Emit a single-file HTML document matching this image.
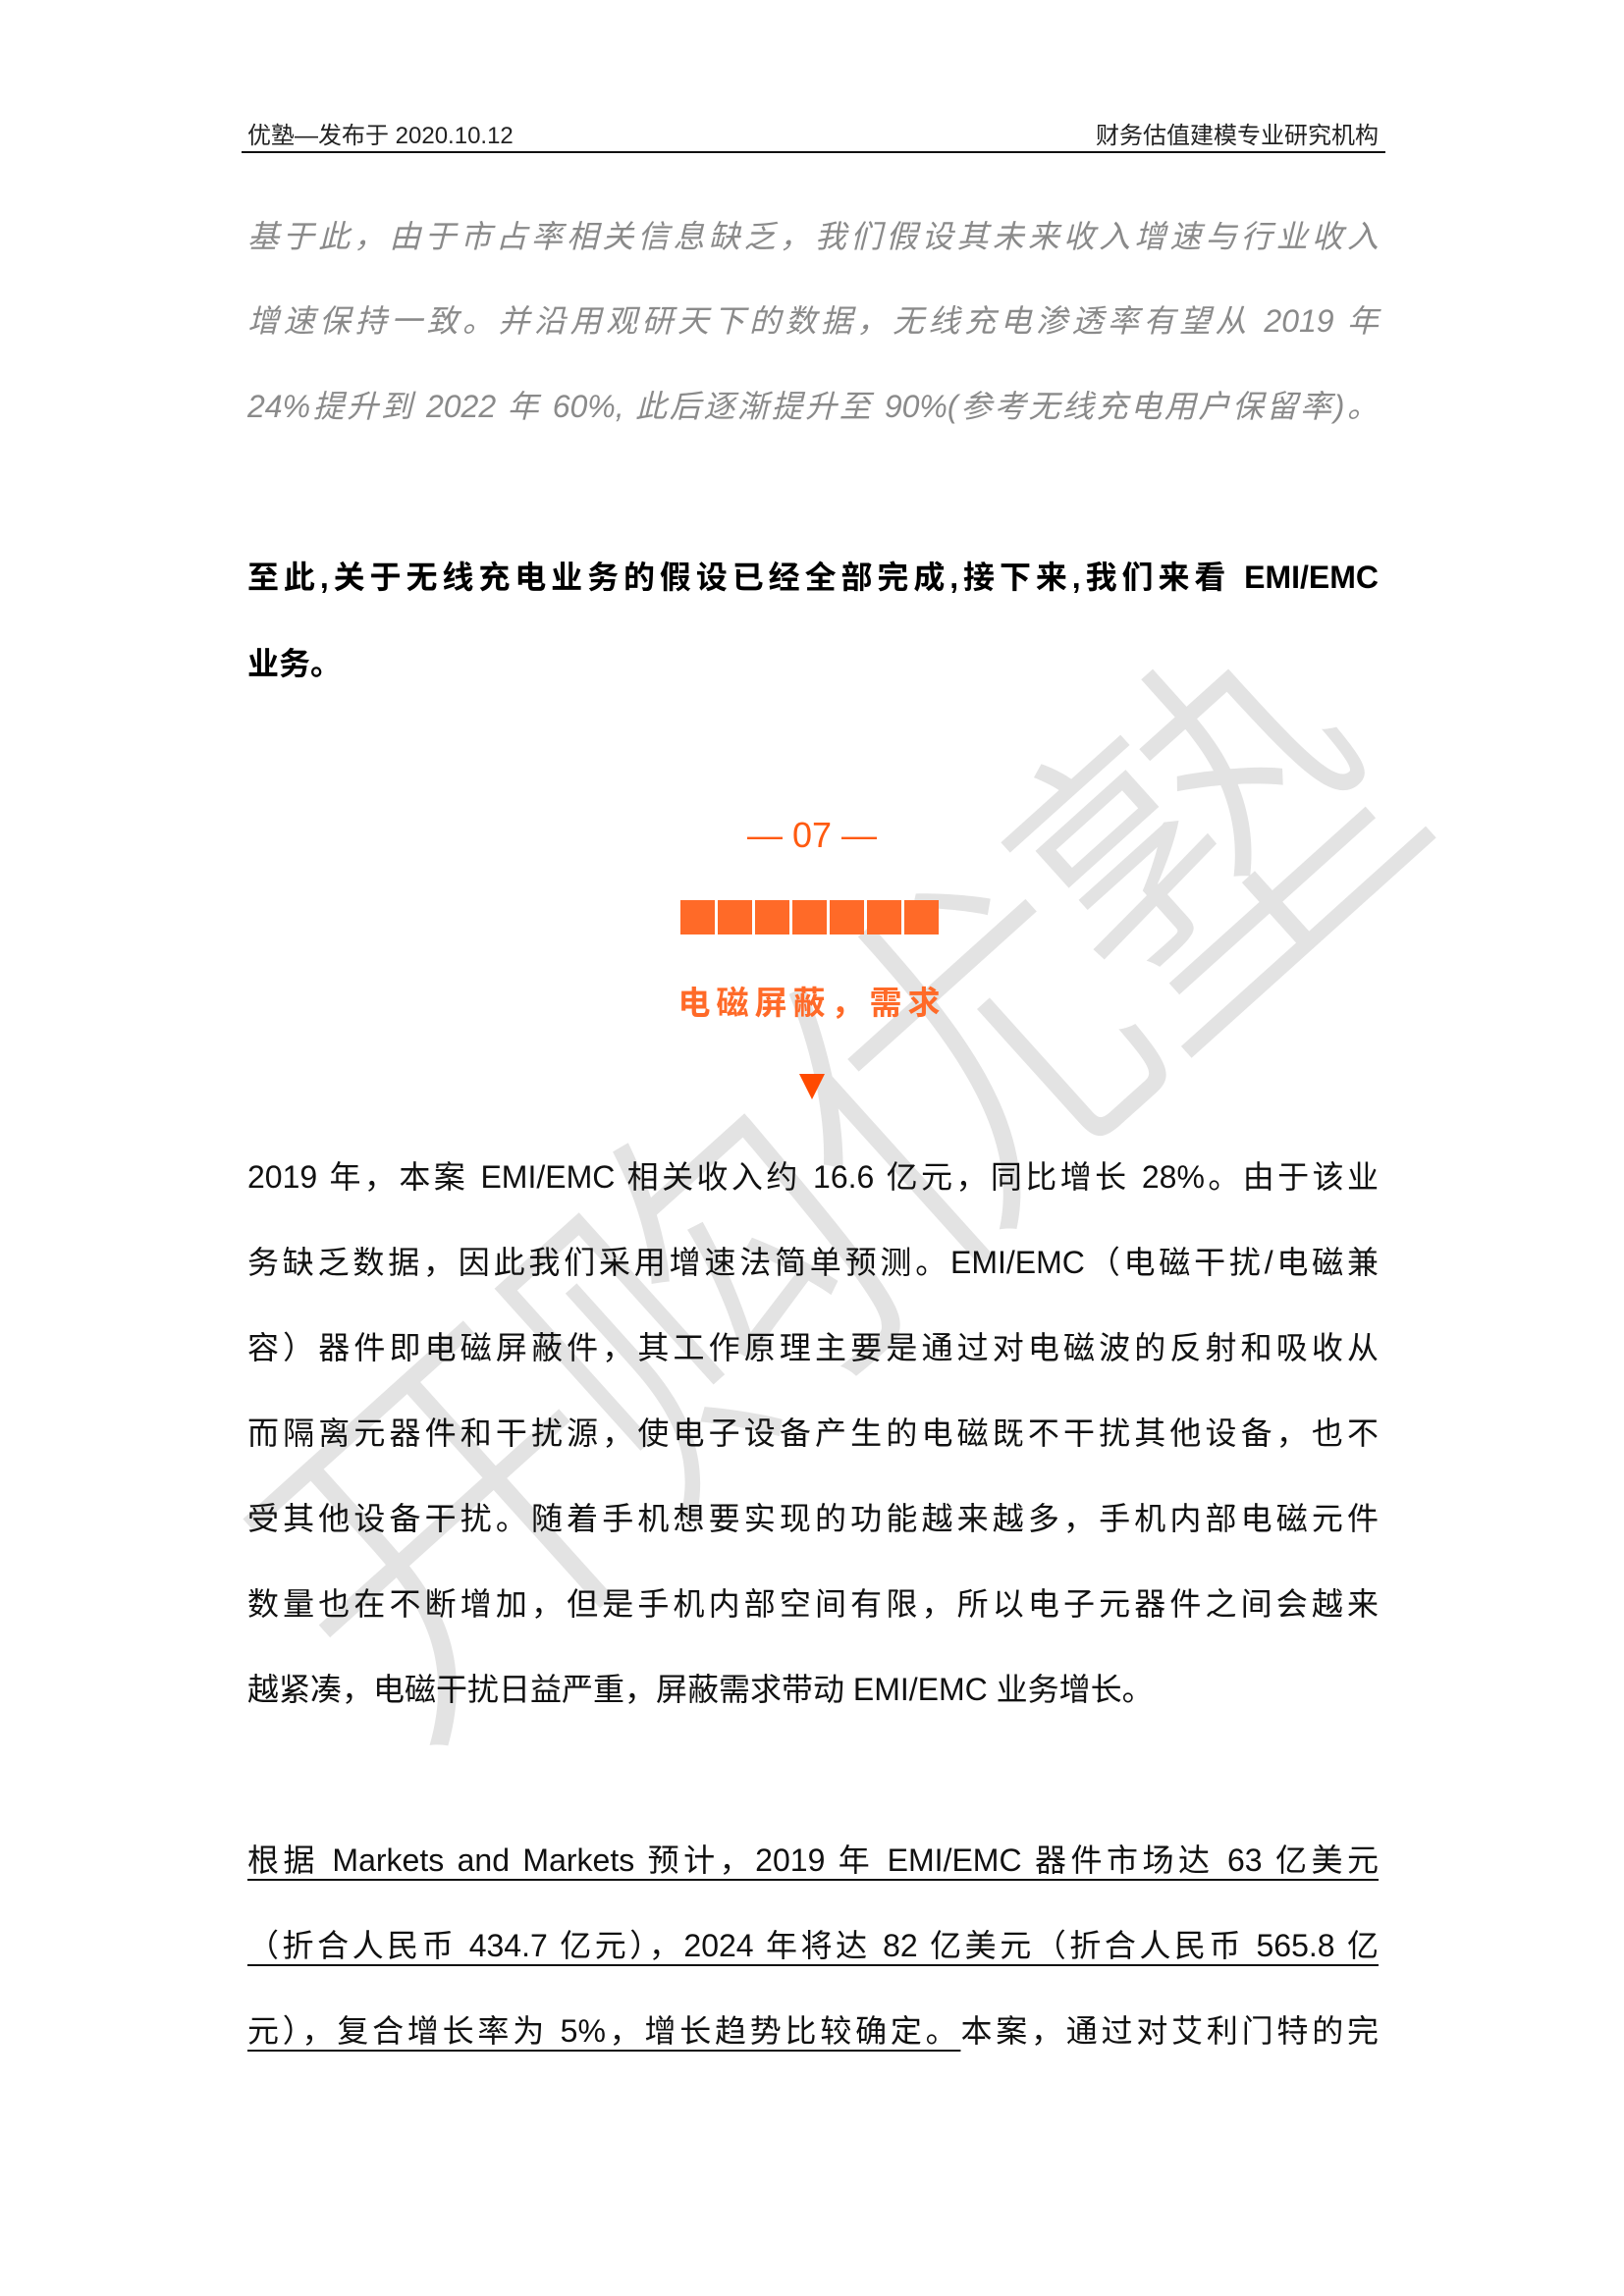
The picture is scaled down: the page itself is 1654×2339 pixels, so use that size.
<!DOCTYPE html>
<html><head><meta charset="utf-8"><style>
html,body{margin:0;padding:0;background:#fff}
body{width:1654px;height:2339px;position:relative;overflow:hidden;font-family:"Liberation Sans","Noto Sans CJK SC",sans-serif}
.l{position:absolute;left:252px;width:1152px;height:50px;line-height:50px;font-size:32px;color:#111;text-align:justify;text-align-last:justify;white-space:nowrap;z-index:2;margin-top:-4px}
.l.n{text-align-last:left}
.it{font-style:italic;color:#8a8a8a}
.b{font-weight:bold;color:#000}
.u{text-decoration:underline;text-underline-offset:8px;text-decoration-thickness:2px}
.wm{position:absolute;left:110px;top:960px;width:1500px;font-size:370px;line-height:400px;color:#e3e3e3;font-family:"Noto Sans CJK SC",sans-serif;font-weight:300;transform:rotate(-42deg);transform-origin:center;z-index:1;white-space:nowrap;letter-spacing:-20px}
</style></head><body>
<div class="wm">开购优塾</div>
<div style="position:absolute;left:252px;top:118px;font-size:24px;color:#222">优塾—发布于 2020.10.12</div>
<div style="position:absolute;right:250px;top:118px;font-size:24px;color:#222">财务估值建模专业研究机构</div>
<div style="position:absolute;left:246px;top:154px;width:1165px;height:2px;background:#111"></div>

<div class="l it" style="top:220px">基于此，由于市占率相关信息缺乏，我们假设其未来收入增速与行业收入</div>
<div class="l it" style="top:306px">增速保持一致。并沿用观研天下的数据，无线充电渗透率有望从 2019 年</div>
<div class="l it" style="top:393px">24%提升到 2022 年 60%, 此后逐渐提升至 90%(参考无线充电用户保留率)。</div>

<div class="l b" style="top:567px">至此,关于无线充电业务的假设已经全部完成,接下来,我们来看 EMI/EMC</div>
<div class="l b n" style="top:655px">业务。</div>

<div style="position:absolute;left:0;width:1654px;top:826px;text-align:center;font-size:36px;line-height:50px;color:#ff5a10;z-index:2">— 07 —</div>
<div style="position:absolute;left:693px;top:917px;display:flex;gap:3px;z-index:2">
<div style="width:35px;height:35px;background:#ff6a28"></div><div style="width:35px;height:35px;background:#ff6a28"></div><div style="width:35px;height:35px;background:#ff6a28"></div><div style="width:35px;height:35px;background:#ff6a28"></div><div style="width:35px;height:35px;background:#ff6a28"></div><div style="width:35px;height:35px;background:#ff6a28"></div><div style="width:35px;height:35px;background:#ff6a28"></div>
</div>
<div style="position:absolute;left:0;width:1654px;top:997px;text-align:center;font-size:33px;line-height:50px;font-weight:bold;color:#ff6a28;letter-spacing:6px;z-index:2">电磁屏蔽，需求</div>
<div style="position:absolute;left:814px;top:1094px;width:0;height:0;border-left:13px solid transparent;border-right:13px solid transparent;border-top:26px solid #ff4a00;z-index:2"></div>

<div class="l" style="top:1178px">2019 年，本案 EMI/EMC 相关收入约 16.6 亿元，同比增长 28%。由于该业</div>
<div class="l" style="top:1265px">务缺乏数据，因此我们采用增速法简单预测。EMI/EMC（电磁干扰/电磁兼</div>
<div class="l" style="top:1352px">容）器件即电磁屏蔽件，其工作原理主要是通过对电磁波的反射和吸收从</div>
<div class="l" style="top:1439px">而隔离元器件和干扰源，使电子设备产生的电磁既不干扰其他设备，也不</div>
<div class="l" style="top:1526px">受其他设备干扰。随着手机想要实现的功能越来越多，手机内部电磁元件</div>
<div class="l" style="top:1613px">数量也在不断增加，但是手机内部空间有限，所以电子元器件之间会越来</div>
<div class="l n" style="top:1700px">越紧凑，电磁干扰日益严重，屏蔽需求带动 EMI/EMC 业务增长。</div>

<div class="l u" style="top:1874px">根据 Markets and Markets 预计，2019 年 EMI/EMC 器件市场达 63 亿美元</div>
<div class="l u" style="top:1961px">（折合人民币 434.7 亿元），2024 年将达 82 亿美元（折合人民币 565.8 亿</div>
<div class="l" style="top:2048px"><span class="u">元），复合增长率为 5%，增长趋势比较确定。</span>本案，通过对艾利门特的完</div>
</body></html>
